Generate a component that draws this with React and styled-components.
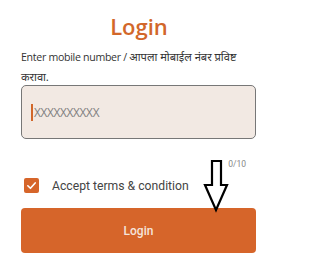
import React from 'react';
import styled, { createGlobalStyle } from 'styled-components';

const GlobalStyle = createGlobalStyle`
  html, body {
    margin: 0;
    padding: 0;
    background: #fff;
  }
`;

const Page = styled.div`
  position: relative;
  width: 272px;
  height: 263px;
  box-sizing: border-box;
  padding: 10px 16px 0 21px;
  font-family: "Open Sans", "Noto Sans", sans-serif;
  overflow: hidden;
`;

const Title = styled.h1`
  margin: 0;
  text-align: center;
  font-family: "Open Sans", sans-serif;
  font-size: 22px;
  font-weight: 600;
  line-height: 32px;
  color: #d2672a;
  padding-left: 1px;
`;

const Hint = styled.p`
  margin: 5px 0 0;
  font-family: "Lato", "Noto Sans", sans-serif;
  font-size: 11.1px;
  line-height: 19px;
  color: #333;
`;

const HintLine = styled.span`
  display: block;
  white-space: nowrap;
`;

const Latin = styled.span`
  font-family: "Open Sans", sans-serif;
  font-size: 10.6px;
  letter-spacing: -0.3px;
`;

const InputBox = styled.div`
  margin-top: -1px;
  height: 54px;
  box-sizing: border-box;
  border: 1.5px solid #777;
  border-radius: 5px;
  background: #f2e9e3;
  display: flex;
  align-items: center;
  padding-left: 9px;
`;

const Caret = styled.span`
  width: 2px;
  height: 17px;
  background: #d2672a;
  margin-right: 1px;
`;

const Placeholder = styled.span`
  font-family: "Open Sans", sans-serif;
  font-size: 11.8px;
  color: #808080;
  letter-spacing: -0.3px;
`;

const Counter = styled.div`
  margin-top: 20px;
  padding-right: 10px;
  text-align: right;
  font-family: "Roboto", sans-serif;
  font-size: 8.5px;
  color: #888;
`;

const CheckRow = styled.label`
  margin-top: 9px;
  display: flex;
  align-items: center;
  gap: 13px;
  padding-left: 3px;
  font-family: "Roboto", sans-serif;
  font-size: 12.2px;
  color: #444;
`;

const CheckBox = styled.span`
  width: 15px;
  height: 15px;
  border-radius: 2px;
  background: #d6652a;
  display: flex;
  align-items: center;
  justify-content: center;
`;

const LoginButton = styled.button`
  margin-top: 15px;
  width: 100%;
  height: 45px;
  border: none;
  border-radius: 4px;
  background: #d6652a;
  color: #f5e4da;
  font-family: "Roboto", sans-serif;
  font-weight: 500;
  font-size: 12px;
`;

const Arrow = styled.svg`
  position: absolute;
  left: 203px;
  top: 159px;
`;

export default function App() {
  return (
    <>
      <GlobalStyle />
      <Page>
        <Title>Login</Title>
        <Hint>
          <HintLine>
            <Latin>Enter mobile number / </Latin>आपला मोबाईल नंबर प्रविष्ट
          </HintLine>
          <HintLine>करावा.</HintLine>
        </Hint>
        <InputBox>
          <Caret />
          <Placeholder>XXXXXXXXXX</Placeholder>
        </InputBox>
        <Counter>0/10</Counter>
        <CheckRow>
          <CheckBox>
            <svg width="11" height="11" viewBox="0 0 12 12">
              <path d="M2 6.3 L4.8 9 L10 3.2" fill="none" stroke="#fff" strokeWidth="1.8" strokeLinecap="round" strokeLinejoin="round" />
            </svg>
          </CheckBox>
          Accept terms &amp; condition
        </CheckRow>
        <LoginButton>Login</LoginButton>
        <Arrow width="26" height="54" viewBox="0 0 26 54">
          <path d="M9 2 H18 V26 H24 L13 51 L2 26 H9 Z" fill="#fff" stroke="#000" strokeWidth="2.2" strokeLinejoin="miter" />
        </Arrow>
      </Page>
    </>
  );
}
